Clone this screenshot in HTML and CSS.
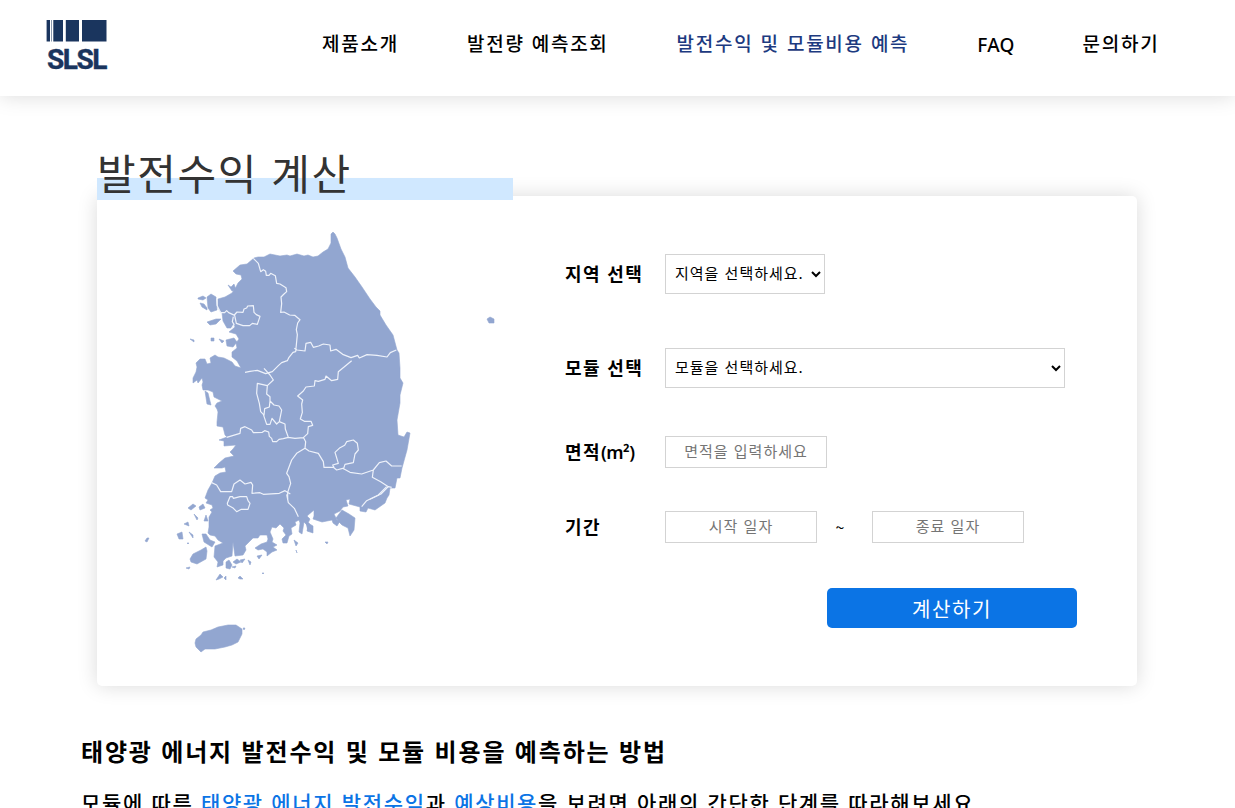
FILE: index.html
```html
<!DOCTYPE html>
<html lang="ko">
<head>
<meta charset="utf-8">
<title>SLSL</title>
<link rel="stylesheet" href="styles.css">
</head>
<body>
<header class="header">
  <a class="logo">
    <svg class="logo-mark" viewBox="0 0 61 22" width="61" height="22"><path d="M.6 0H4v21.500H.6zM5.300 0h.5v21.500h-.5zM7.300 0H17v21.500H7.300zM19.800 0H33v21.500H19.800zM36 0h24.500v21.500H36z"/></svg>
    <span class="logo-text">SLSL</span>
  </a>
  <nav class="nav">
    <a>제품소개</a>
    <a>발전량 예측조회</a>
    <a class="active">발전수익 및 모듈비용 예측</a>
    <a class="latin">FAQ</a>
    <a>문의하기</a>
  </nav>
</header>
<main class="main">
  <h1 class="title">발전수익 계산</h1>
  <section class="card">
    <svg class="map" viewBox="140 225 360 435" width="360" height="435">
      <g class="land">
        <path d="M254 258L247 264 240 265 233 271 236 274 241 275 242 279 238 283 236 287 232 293 225 297 218 299 218 308 222 313 223 321 227 328 231 328 234 324 235 327 229 332 236 334 239 339 236 343 237 348 232 352 232 357 237 361 241 368 235 366 232 362 224 358 218 357 215 355 210 358 211 363 207 364 205 359 200 359 196 363 197 367 196 372 193 378 193 383 197 380 198 383 202 378 203 382 202 385 203 390 208 390 213 392 214 397 222 401 217 403 215 406 217 409 218 412 217 422 217 426 223 427 225 435 227 437 219 440 224 441 224 446 236 445 233 449 230 452 234 456 225 458 219 463 214 468 222 468 225 467 226 472 220 473 215 476 212 483 208 490 205 498 208 500 206 503 212 505 213 508 210 510 212 512 209 517 209 527 208 533 210 535 215 536 218 540 223 543 215 546 214 557 218 562 217 567 223 565 223 561 226 558 232 556 233 542 235 556 243 555 246 550 245 546 250 541 253 538 258 538 260 535 267 535 268 539 267 542 261 544 255 548 258 550 263 549 267 552 267 556 272 552 277 550 273 547 277 545 272 542 273 539 270 532 272 527 276 528 280 524 284 528 283 531 286 535 282 539 283 543 287 543 289 536 292 534 291 528 296 525 295 522 299 520 300 523 299 532 302 534 304 522 308 526 307 531 313 533 313 526 308 523 310 519 307 516 314 510 314 516 313 519 322 522 332 520 333 523 337 526 340 521 337 520 334 514 340 511 343 507 348 506 346 500 350 499 349 504 360 507 360 511 366 512 368 508 375 510 385 503 387 498 389 495 390 488 395 488 397 478 400 478 402 468 407 450 410 433 407 432 404 437 398 435 397 420 400 403 400 395 403 383 400 378 400 368 399 353 397 350 393 335 386 325 380 315 380 311 376 307 370 299 362 287 355 277 348 268 345 257 341 249 337 238 335 234 333 232 331 234 331 243 328 249 323 252 318 256 313 257 308 255 304 256 297 254 290 256 287 255 280 256 270 254 264 257 258 257z"/>
        <path d="M198 298l5-2 3 2-3 2-5-1zM207 297l4-3 5 3 1 13-6 2-3-4zM200 303l4 1 3 4 0 2-5-3zM207 322l9-3 5 0-5 5-6 1zM226 340l8-2 3 4-4 5-6-1zM219 339l5 2-2 2zM211 338l3 0 0 3-3 0zM190 339l4 1 0 2zM228 285l3 2 3-3 2 6-4 1zM205 391l3 2 3 12-4-1zM336 518l6-8 7 4 6 4-1 12-4 6-2-8-6-3-3-3zM190 559l3-5 8-4 5-3 1 4-1 8-9 5-6-2zM202 534l4 0 4 6 5 2-3 5-8-5zM188 508l5-4 3 2-5 4zM199 507l4-3 2 4-5 2zM194 514l4 4-1 2zM206 515l2 6-4 0zM184 524l4-2 1 4zM177 534l5-2 1 7-4 0zM189 532l4 3 0 3zM187 543l2 0-1 1zM145 541l2-3 2 0-2 4zM186 568l4-1-1 2zM216 580l4-6 3 3-4 2zM224 578l2-2 0 4zM238 578l2-2 3 3-3 0zM226 562l3-2 3 5-2 4-4-1zM233 562l4-3 4 3-5 2zM240 560l5-1-3 4zM232 567l4-1-1 2zM248 560l3 2-1 3zM257 556l5-1-3 4zM294 540l4 3-2 3zM296 550l1 3zM306 523l3 0 2 7-3 1zM325 542l3 0-1 2zM262 573l2 0-1 1z"/>
        <path d="M195 643l1-4 5-4 2-3 8-2 7-3 10-2 8 0 6 4 0 5-4 8-6 3-7 2-10 2-10 0-4 3-5-5zM243 628l2 0-1 2zM487 319l3-2 4 2 0 4-5 0z"/>
      </g>
      <g class="borders">
        <path transform="translate(180 225) scale(.33333)" d="M220 100l15 15 7 25 8-6 7 5 2 12 8 0 5-6 14 7 4 23 10 2 18 11 2 12-8 7-9 9 2 20-3 26 10-1 17 9 15 1 16 13-7 10-4 20 3 15-5 51-8 2-12 15-5 10-17 6-10 9-18 18-20 6-25-10-22 3-15 3M343 370l8 5 24 3 3-23 14-3 8 15 16-4 14-6 20 3 2 18 16-5 20 15 25 10 20-7 5 8 23-10 30 2 30 5 10-13 18-8M163 270l8-9 18 1 3-10 8-3 3-6 17-1 2 20 7 7 11 5-8 24-15-3-8 7-20 0-20-7-5-24-18-8-6-6-6 6-12 0-11-22-1-21M160 275l-3 15 5 8-7 12"/>
        <path transform="translate(180 350) scale(.33333)" d="M252 55l18 20 10 15-18 17-30-7-2 30 8 30 4 25 8 8 10 30 10 0 6-18 14 17 8-7 7-35-8-12-15-3-12-12-2 18-14 5-2 20M262 107l-2 25 10 8 0 15M298 215l17 7 1 15 9 25M140 262l40-12 2-15 13-5 20 10 5 8 27-1 7-5 12 4 2 13 7 6 3 10 12 0 7-7 13-2 15-4 20 3 25-2 13-12 2-21 13-4-5-12-20 0-12-7 6-20-2-25 3-12-15-12 17-15 8-12 25-3 2-16 10 2 20-6 3-10 17 14 18-4 2-23 40-33M370 262l7 13-2 20 12 8 28 7 15 25 2 17 28 0 10 8 18-5 22 12 35 5 35-12 18-22 20-5 17 15 30 0M462 352l-4-7 17-5-7-23-3-10 15-14 14-7 6-11 20-5 12 10 3 20-10 12-5 26-25 5-5 15M580 360l-3 22 25 13 23 15 10 2M625 410l-22 22-33 16M375 295l-25 15-15 20-15 40 7 10 5 20-9 27 0 21M95 398l15 7 12 20 33 0 7-23 18-12 15 12 18-5 5 8-2 25 24-2 10 5 48-3 17-8 16 10"/>
        <path transform="translate(140 470) scale(.33333)" d="M440 73l5 25 18 17 12 25M740 50l-25 25-35 17-15 18M262 100l8-20 8 0 2 5 20-5 20 0 4 12 6 8-6 18-20 0-14 7-12-12-15-8z"/>
      </g>
    </svg>
    <form class="form">
      <div class="row row-region"><label>지역 선택</label><select class="region"><option>지역을 선택하세요.</option></select></div>
      <div class="row row-module"><label>모듈 선택</label><select class="module"><option>모듈을 선택하세요.</option></select></div>
      <div class="row row-area"><label>면적<span class="unit">(m²)</span></label><input class="area" placeholder="면적을 입력하세요"></div>
      <div class="row row-period"><label>기간</label><input class="date" placeholder="시작 일자"><span class="tilde">~</span><input class="date" placeholder="종료 일자"></div>
      <button class="submit" type="button">계산하기</button>
    </form>
  </section>
  <section class="guide">
    <h2>태양광 에너지 발전수익 및 모듈 비용을 예측하는 방법</h2>
    <p>모듈에 따른 <b>태양광 에너지 발전수익</b>과 <b>예상비용</b>을 보려면 아래의 간단한 단계를 따라해보세요</p>
  </section>
</main>
</body>
</html>
```
FILE: styles.css
```css
* { box-sizing: border-box; }
body {
  margin: 0;
  height: 808px;
  overflow: hidden;
  background: #fff;
  color: #000;
  font-family: "Noto Sans CJK KR", sans-serif;
}
.header {
  display: flex;
  height: 96px;
  padding-left: 46px;
  box-shadow: 0 0 20px rgba(0, 0, 0, .15);
}
.logo { display: flex; flex-direction: column; width: 276px; padding-top: 20px; color: #1a355e; }
.logo-mark { fill: #1a355e; }
.logo-text {
  margin-top: 4px;
  padding-left: 1px;
  font: 700 28px/28px Roboto, sans-serif;
  letter-spacing: -1.5px;
  -webkit-text-stroke: .4px #1a355e;
}
.nav { display: flex; gap: 68px; padding-top: 28px; white-space: nowrap; }
.nav a { font-size: 19px; line-height: 30px; font-weight: 500; letter-spacing: 1.75px; }
.nav .active { color: #1d3a80; }
.nav .latin { font-family: "Noto Sans", sans-serif; letter-spacing: .2px; line-height: 34px; }
.main { padding-top: 48px; }
.title {
  position: relative;
  z-index: 1;
  width: 416px;
  height: 56px;
  margin: 0 0 -4px 97px;
  background: linear-gradient(#d0e8ff, #d0e8ff) bottom / 100% 22px no-repeat;
  color: #333;
  font-size: 42px;
  line-height: 55px;
  font-weight: 400;
  letter-spacing: 1.6px;
}
.card {
  display: flex;
  width: 1040px;
  height: 490px;
  margin-left: 97px;
  padding: 29px 0 0 43px;
  border-radius: 5px;
  background: #fff;
  box-shadow: 0 0 20px rgba(0, 0, 0, .15);
}
.map { flex: none; }
.land { fill: #92a6d0; stroke: #92a6d0; stroke-width: .6; stroke-linejoin: round; }
.borders { fill: none; stroke: #eef2fa; stroke-width: 3.6; stroke-linejoin: round; }
.form { display: flex; flex-direction: column; width: 512px; margin-left: 65px; padding-top: 29px; }
.row { display: flex; align-items: center; height: 32px; }
.row label { width: 100px; padding-bottom: 2px; font-size: 18px; line-height: 28px; font-weight: 700; letter-spacing: 1.4px; white-space: nowrap; }
.unit { font-family: "Noto Sans", sans-serif; font-weight: 600; letter-spacing: -.5px; }
.row-region { height: 40px; margin-bottom: 54px; }
.row-module { height: 40px; margin-bottom: 48px; }
.row-area { margin-bottom: 43px; }
.row-period { margin-bottom: 45px; }
select, input {
  border: 1px solid #d3d3d3;
  border-radius: 0;
  background: #fff;
  color: #000;
  font-family: "Noto Sans CJK KR", sans-serif;
  font-size: 15px;
  font-weight: 400;
  letter-spacing: 1px;
}
select { height: 40px; padding: 0 0 3px 5px; }
input { height: 32px; padding: 0 1px 3px; text-align: center; }
input::placeholder { color: #757575; }
.region { width: 160px; }
.module { width: 400px; }
.area { width: 162px; }
.date { width: 152px; }
.tilde { width: 55px; padding-right: 9px; text-align: center; font-size: 16px; }
.submit {
  align-self: flex-end;
  width: 250px;
  height: 40px;
  padding: 0;
  border: 0;
  border-radius: 5px;
  background: #0b74e5;
  color: #fff;
  font: 400 20px "Noto Sans CJK KR", sans-serif;
  letter-spacing: 1.6px;
}
.guide { padding: 47px 0 0 81px; white-space: nowrap; }
.guide h2 { margin: 0; font-size: 24px; line-height: 36px; font-weight: 700; letter-spacing: 1.83px; }
.guide p { margin: 17px 0 0; font-size: 21px; line-height: 32px; font-weight: 500; letter-spacing: 1.65px; }
.guide b { color: #0b74e5; font-weight: 500; }
```
